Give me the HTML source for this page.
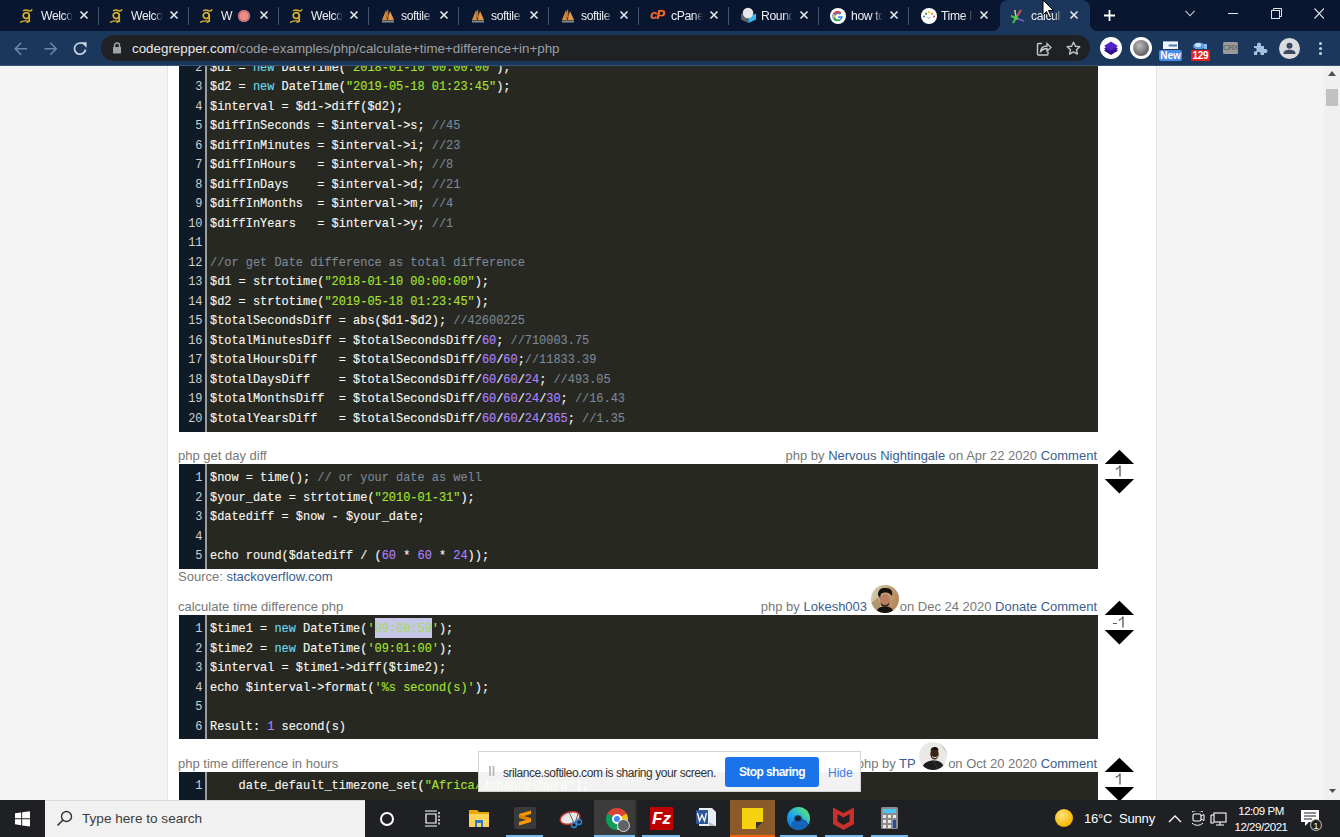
<!DOCTYPE html>
<html><head><meta charset="utf-8">
<style>
*{margin:0;padding:0;box-sizing:border-box}
html,body{width:1340px;height:837px;overflow:hidden;background:#fff;font-family:"Liberation Sans",sans-serif}
.abs{position:absolute}
#tabbar{position:absolute;left:0;top:0;width:1340px;height:31px;background:#08172f}
#toolbar{position:absolute;left:0;top:31px;width:1340px;height:35px;background:#1b375b}
#page{position:absolute;left:0;top:66px;width:1340px;height:734px;background:#fff;overflow:hidden}
#lgray{position:absolute;left:0;top:0;width:168px;height:734px;background:#f4f4f4;border-right:1px solid #e6e6e6}
#rgray{position:absolute;left:1156px;top:0;width:168px;height:734px;background:#f4f4f4;border-left:1px solid #e6e6e6}
#sbar{position:absolute;left:1324px;top:0;width:16px;height:734px;background:#f0f0f0}
#taskbar{position:absolute;left:0;top:800px;width:1340px;height:37px;background:#1f2023}
.code{position:absolute;left:179px;width:919px;background:#272822;overflow:hidden}
.gut{position:absolute;left:0;top:0;bottom:0;width:28px;background:#0f1a27;border-right:2px solid #9c9c9c}
.lines{position:absolute;left:0;font-family:"Liberation Mono",monospace;font-size:11.93px;line-height:19.5px;white-space:pre;color:#f8f8f2}
.ln{position:absolute;left:0;width:23.5px;text-align:right;font-family:"Liberation Mono",monospace;font-size:11.93px;line-height:19.5px;color:#d0d0d0;white-space:pre}
.txt{position:absolute;left:31px;font-family:"Liberation Mono",monospace;font-size:11.93px;line-height:19.5px;color:#f8f8f2;white-space:pre;-webkit-text-stroke:0.12px currentColor}
.s{color:#a6e22e}.k{color:#66d9ef}.c{color:#7b8794}.n{color:#ae81ff}.o{color:#f92672}
.title{position:absolute;left:178px;font-size:13px;color:#777;white-space:nowrap}
.meta{position:absolute;right:243px;font-size:13px;color:#777;white-space:nowrap}
.meta a{color:#3a5d92;text-decoration:none}
.up,.dn{position:absolute;left:1100px;width:40px;height:20px;overflow:visible}
.vc{position:absolute;left:1104.7px;width:29.4px;text-align:center;font-size:14.5px;line-height:16px;color:#4a4a4a}

.tab{position:absolute;top:0;height:31px;width:90px}
.tsep{position:absolute;top:7px;width:1px;height:18px;background:#45556b}
.fav{position:absolute;top:8px;width:16px;height:16px;overflow:visible}
.ttl{position:absolute;top:8px;font-size:12.2px;letter-spacing:-0.4px;color:#eceef2;white-space:nowrap;overflow:hidden;line-height:16px}
.tx{position:absolute;top:10px;width:10px;height:10px}
.ext{position:absolute}
</style></head><body>
<div id="tabbar">
<div class="abs" style="left:1000px;top:0;width:90px;height:31px;background:#1b375b;border-radius:8px 8px 0 0"></div>
<div class="abs" style="left:992px;top:23px;width:8px;height:8px;background:radial-gradient(circle at 0 0,transparent 8px,#1b375b 8.5px)"></div>
<div class="abs" style="left:1090px;top:23px;width:8px;height:8px;background:radial-gradient(circle at 100% 0,transparent 8px,#1b375b 8.5px)"></div>
<div class="ttl" style="left:41px;width:32px;-webkit-mask-image:linear-gradient(90deg,#000 72%,transparent);">Welco</div>
<svg class="tx" style="left:79px" viewBox="0 0 10 10"><path d="M1.5 1.5L8.5 8.5M8.5 1.5L1.5 8.5" stroke="#e8eaed" stroke-width="1.6"/></svg>
<div class="ttl" style="left:131px;width:32px;-webkit-mask-image:linear-gradient(90deg,#000 72%,transparent);">Welco</div>
<svg class="tx" style="left:169px" viewBox="0 0 10 10"><path d="M1.5 1.5L8.5 8.5M8.5 1.5L1.5 8.5" stroke="#e8eaed" stroke-width="1.6"/></svg>
<div class="tsep" style="left:98px"></div>
<div class="ttl" style="left:221px;width:32px;-webkit-mask-image:linear-gradient(90deg,#000 72%,transparent);">W</div>
<svg class="tx" style="left:259px" viewBox="0 0 10 10"><path d="M1.5 1.5L8.5 8.5M8.5 1.5L1.5 8.5" stroke="#e8eaed" stroke-width="1.6"/></svg>
<div class="tsep" style="left:188px"></div>
<div class="ttl" style="left:311px;width:32px;-webkit-mask-image:linear-gradient(90deg,#000 72%,transparent);">Welco</div>
<svg class="tx" style="left:349px" viewBox="0 0 10 10"><path d="M1.5 1.5L8.5 8.5M8.5 1.5L1.5 8.5" stroke="#e8eaed" stroke-width="1.6"/></svg>
<div class="tsep" style="left:278px"></div>
<div class="ttl" style="left:401px;width:32px;-webkit-mask-image:linear-gradient(90deg,#000 72%,transparent);">softile</div>
<svg class="tx" style="left:439px" viewBox="0 0 10 10"><path d="M1.5 1.5L8.5 8.5M8.5 1.5L1.5 8.5" stroke="#e8eaed" stroke-width="1.6"/></svg>
<div class="tsep" style="left:368px"></div>
<div class="ttl" style="left:491px;width:32px;-webkit-mask-image:linear-gradient(90deg,#000 72%,transparent);">softile</div>
<svg class="tx" style="left:529px" viewBox="0 0 10 10"><path d="M1.5 1.5L8.5 8.5M8.5 1.5L1.5 8.5" stroke="#e8eaed" stroke-width="1.6"/></svg>
<div class="tsep" style="left:458px"></div>
<div class="ttl" style="left:581px;width:32px;-webkit-mask-image:linear-gradient(90deg,#000 72%,transparent);">softile</div>
<svg class="tx" style="left:619px" viewBox="0 0 10 10"><path d="M1.5 1.5L8.5 8.5M8.5 1.5L1.5 8.5" stroke="#e8eaed" stroke-width="1.6"/></svg>
<div class="tsep" style="left:548px"></div>
<div class="ttl" style="left:671px;width:32px;-webkit-mask-image:linear-gradient(90deg,#000 72%,transparent);">cPanel</div>
<svg class="tx" style="left:709px" viewBox="0 0 10 10"><path d="M1.5 1.5L8.5 8.5M8.5 1.5L1.5 8.5" stroke="#e8eaed" stroke-width="1.6"/></svg>
<div class="tsep" style="left:638px"></div>
<div class="ttl" style="left:761px;width:32px;-webkit-mask-image:linear-gradient(90deg,#000 72%,transparent);">Round</div>
<svg class="tx" style="left:799px" viewBox="0 0 10 10"><path d="M1.5 1.5L8.5 8.5M8.5 1.5L1.5 8.5" stroke="#e8eaed" stroke-width="1.6"/></svg>
<div class="tsep" style="left:728px"></div>
<div class="ttl" style="left:851px;width:32px;-webkit-mask-image:linear-gradient(90deg,#000 72%,transparent);">how to</div>
<svg class="tx" style="left:889px" viewBox="0 0 10 10"><path d="M1.5 1.5L8.5 8.5M8.5 1.5L1.5 8.5" stroke="#e8eaed" stroke-width="1.6"/></svg>
<div class="tsep" style="left:818px"></div>
<div class="ttl" style="left:941px;width:32px;-webkit-mask-image:linear-gradient(90deg,#000 72%,transparent);">Time I</div>
<svg class="tx" style="left:979px" viewBox="0 0 10 10"><path d="M1.5 1.5L8.5 8.5M8.5 1.5L1.5 8.5" stroke="#e8eaed" stroke-width="1.6"/></svg>
<div class="tsep" style="left:908px"></div>
<div class="ttl" style="left:1031px;width:32px;-webkit-mask-image:linear-gradient(90deg,#000 72%,transparent);">calcul</div>
<svg class="tx" style="left:1069px" viewBox="0 0 10 10"><path d="M1.5 1.5L8.5 8.5M8.5 1.5L1.5 8.5" stroke="#e8eaed" stroke-width="1.6"/></svg>
<svg class="fav" style="left:20px" viewBox="0 0 16 16"><g fill="none" stroke="#d6b02c" stroke-linecap="round"><path d="M3.5 2.6C5 1.8 7.5 2.2 9 2.8C10.5 3.2 11.5 2.5 11.8 1.8" stroke-width="1.5"/><circle cx="6.2" cy="7.6" r="3" stroke-width="1.7"/><path d="M9.3 6.5V11.5C9.3 13 8.5 14 7 14.2" stroke-width="1.6"/><path d="M0.6 14.2C3 13 6.5 12.6 9.6 13.4" stroke-width="1.4"/></g><circle cx="7" cy="7.4" r="1.1" fill="#0a1830"/></svg>
<svg class="fav" style="left:110px" viewBox="0 0 16 16"><g fill="none" stroke="#d6b02c" stroke-linecap="round"><path d="M3.5 2.6C5 1.8 7.5 2.2 9 2.8C10.5 3.2 11.5 2.5 11.8 1.8" stroke-width="1.5"/><circle cx="6.2" cy="7.6" r="3" stroke-width="1.7"/><path d="M9.3 6.5V11.5C9.3 13 8.5 14 7 14.2" stroke-width="1.6"/><path d="M0.6 14.2C3 13 6.5 12.6 9.6 13.4" stroke-width="1.4"/></g><circle cx="7" cy="7.4" r="1.1" fill="#0a1830"/></svg>
<svg class="fav" style="left:200px" viewBox="0 0 16 16"><g fill="none" stroke="#d6b02c" stroke-linecap="round"><path d="M3.5 2.6C5 1.8 7.5 2.2 9 2.8C10.5 3.2 11.5 2.5 11.8 1.8" stroke-width="1.5"/><circle cx="6.2" cy="7.6" r="3" stroke-width="1.7"/><path d="M9.3 6.5V11.5C9.3 13 8.5 14 7 14.2" stroke-width="1.6"/><path d="M0.6 14.2C3 13 6.5 12.6 9.6 13.4" stroke-width="1.4"/></g><circle cx="7" cy="7.4" r="1.1" fill="#0a1830"/></svg>
<svg class="fav" style="left:290px" viewBox="0 0 16 16"><g fill="none" stroke="#d6b02c" stroke-linecap="round"><path d="M3.5 2.6C5 1.8 7.5 2.2 9 2.8C10.5 3.2 11.5 2.5 11.8 1.8" stroke-width="1.5"/><circle cx="6.2" cy="7.6" r="3" stroke-width="1.7"/><path d="M9.3 6.5V11.5C9.3 13 8.5 14 7 14.2" stroke-width="1.6"/><path d="M0.6 14.2C3 13 6.5 12.6 9.6 13.4" stroke-width="1.4"/></g><circle cx="7" cy="7.4" r="1.1" fill="#0a1830"/></svg>
<div class="abs" style="left:238px;top:9.5px;width:12px;height:12px;border-radius:50%;background:#f2897c;box-shadow:0 0 0 1.5px #b86a6a inset,0 0 0 2.5px #e09090 inset"></div>
<svg class="fav" style="left:380px" viewBox="0 0 16 16"><path d="M2 12L6 2L7 12Z" fill="#d98b3a"/><path d="M7.5 12L10 3L14 12Z" fill="#e59a4a"/><path d="M5 6L8 1L9 12Z" fill="#c8782e"/><rect x="2" y="12.5" width="12" height="2" fill="#8a8a8a"/></svg>
<svg class="fav" style="left:470px" viewBox="0 0 16 16"><path d="M2 12L6 2L7 12Z" fill="#d98b3a"/><path d="M7.5 12L10 3L14 12Z" fill="#e59a4a"/><path d="M5 6L8 1L9 12Z" fill="#c8782e"/><rect x="2" y="12.5" width="12" height="2" fill="#8a8a8a"/></svg>
<svg class="fav" style="left:560px" viewBox="0 0 16 16"><path d="M2 12L6 2L7 12Z" fill="#d98b3a"/><path d="M7.5 12L10 3L14 12Z" fill="#e59a4a"/><path d="M5 6L8 1L9 12Z" fill="#c8782e"/><rect x="2" y="12.5" width="12" height="2" fill="#8a8a8a"/></svg>
<div class="abs" style="left:650px;top:7px;font:italic bold 13px 'Liberation Sans';color:#ff6c2c;letter-spacing:-1px">cP</div>
<svg class="fav" style="left:740px;top:7px" viewBox="0 0 16 16"><path d="M1 6.5L8.5 10V16L1 12.5Z" fill="#56636d"/><path d="M8.5 10L16 6.5V12.5L8.5 16Z" fill="#38b6ee"/><circle cx="8" cy="6" r="5.3" fill="#e6e6e6"/><path d="M1 6.5L8.5 10L16 6.5" fill="none" stroke="none"/></svg>
<svg class="fav" style="left:830px" viewBox="0 0 16 16"><circle cx="8" cy="8" r="8" fill="#fff"/><path d="M12.8 8.2H8v1.8h2.8c-.3 1.2-1.4 2.1-2.8 2.1a3 3 0 1 1 1.9-5.4l1.3-1.3A4.9 4.9 0 1 0 8 13c2.7 0 4.9-2 4.9-4.9z" fill="#4285f4"/><path d="M3.4 5.6A5 5 0 0 1 11.2 4.4L9.9 5.7A3 3 0 0 0 5 7Z" fill="#ea4335"/><path d="M3.3 10.4A5 5 0 0 0 10.5 12.4L9.3 11A3 3 0 0 1 5 9.1Z" fill="#34a853"/><path d="M3.3 5.6A5 5 0 0 0 3.3 10.4L5 9.1A3 3 0 0 1 5 7Z" fill="#fbbc05"/></svg>
<svg class="fav" style="left:921px;top:8px" width="15" height="15" viewBox="0 0 15 15"><circle cx="7.5" cy="7.5" r="7.5" fill="#fff"/><circle cx="2.8" cy="8" r="1" fill="#3a8ad8"/><circle cx="4.8" cy="5.3" r="1" fill="#43a047"/><circle cx="7.4" cy="4" r="1" fill="#f5c518"/><circle cx="10.3" cy="5.3" r="1" fill="#fb8c00"/><circle cx="12.2" cy="8" r="1" fill="#e84a7a"/><path d="M6 8.5L7.4 10L8.8 8.5" stroke="#999" stroke-width="0.9" fill="none"/></svg>
<svg class="fav" style="left:1010px" viewBox="0 0 16 16"><path d="M6 10L3 15M6 10L5 2M6 10L11 2M6 10L14 13M6 10L1 8" stroke-width="1.3" fill="none" stroke="#bbb"/><path d="M6 10L3 15" stroke="#3fbf3f" stroke-width="2"/><path d="M6 10L11 2" stroke="#e05050" stroke-width="1.5"/><path d="M6 10L14 13" stroke="#7050c0" stroke-width="1.5"/><path d="M6 10L1 8" stroke="#40c040" stroke-width="2"/><path d="M6 10L5 2" stroke="#d0d040" stroke-width="1.3"/><circle cx="6" cy="10" r="2" fill="#50d040"/></svg>
<svg class="abs" style="left:1103px;top:9px" width="13" height="13" viewBox="0 0 13 13"><path d="M6.5 1V12M1 6.5H12" stroke="#fff" stroke-width="1.8"/></svg>
<svg class="abs" style="left:1185px;top:9.5px" width="10" height="7" viewBox="0 0 10 7"><path d="M0.5 0.8L5 5.8L9.5 0.8" stroke="#c8ccd4" stroke-width="1.1" fill="none"/></svg>
<div class="abs" style="left:1228px;top:13px;width:10px;height:1px;background:#e8eaed"></div>
<svg class="abs" style="left:1270.5px;top:8px" width="11" height="11" viewBox="0 0 11 11"><path d="M2.5 2.5V0.5H10.5V8.5H8.5" stroke="#e0e2e6" fill="none"/><rect x="0.5" y="2.5" width="8" height="8" stroke="#e0e2e6" fill="none"/></svg>
<svg class="abs" style="left:1313.5px;top:7.5px" width="10.5" height="11" viewBox="0 0 10.5 11"><path d="M0.5 0.5L10 10.5M10 0.5L0.5 10.5" stroke="#e0e2e6" stroke-width="1.1"/></svg>
<svg class="abs" style="left:1042px;top:0px" width="14" height="20" viewBox="0 0 14 20"><path d="M1 0L1 15L4.5 11.5L7.5 18L9.5 17L6.5 10.5L11.5 10.5Z" fill="#fff" stroke="#000" stroke-width="1"/></svg>
</div>
<div id="toolbar">
<svg class="abs" style="left:13px;top:10px" width="16" height="16" viewBox="0 0 16 16"><path d="M14 7.8H2.2M8.2 1.8L2.2 7.8L8.2 13.8" stroke="#6f84a3" stroke-width="1.6" fill="none"/></svg>
<svg class="abs" style="left:42px;top:10px" width="16" height="16" viewBox="0 0 16 16"><path d="M2.5 7.8H14.3M8.3 1.8L14.3 7.8L8.3 13.8" stroke="#6f84a3" stroke-width="1.6" fill="none"/></svg>
<svg class="abs" style="left:72px;top:10px" width="16" height="16" viewBox="0 0 16 16"><path d="M10.5 2.6A5.6 5.6 0 1 0 13.6 8.5" stroke="#c9d6e6" stroke-width="1.7" fill="none"/><path d="M9 1.2H14.6V6.8Z" fill="#c9d6e6"/></svg>
<div class="abs" style="left:101px;top:4px;width:989px;height:26px;border-radius:13px;background:#202124"></div>
<svg class="abs" style="left:112px;top:11px" width="10" height="12" viewBox="0 0 10 12"><path d="M2.5 5V3.5a2.5 2.5 0 0 1 5 0V5" stroke="#a0a4aa" stroke-width="1.5" fill="none"/><rect x="1" y="5" width="8" height="6.5" fill="#a0a4aa"/></svg>
<div class="abs" style="left:132px;top:10px;font-size:13.37px;line-height:16px;color:#9aa0a6;white-space:nowrap"><span style="color:#e8eaed">codegrepper.com</span>/code-examples/php/calculate+time+difference+in+php</div>
<svg class="abs" style="left:1036px;top:10px" width="16" height="15" viewBox="0 0 16 15"><path d="M6 2.5H2.5a1 1 0 0 0-1 1V13a1 1 0 0 0 1 1H11a1 1 0 0 0 1-1V10.5" stroke="#c4c7cb" stroke-width="1.4" fill="none"/><path d="M4.5 10.5C5 6.5 8 5 11 5V2.5L15 6.5L11 10V7.5C8.5 7.5 6.5 8.3 4.5 10.5Z" stroke="#c4c7cb" stroke-width="1.3" fill="none"/></svg>
<svg class="abs" style="left:1066px;top:10px" width="15" height="15" viewBox="0 0 15 15"><path d="M7.5 1.2L9.4 5.3L13.8 5.7L10.5 8.7L11.4 13.1L7.5 10.9L3.6 13.1L4.5 8.7L1.2 5.7L5.6 5.3Z" stroke="#c4c7cb" stroke-width="1.4" fill="none" stroke-linejoin="round"/></svg>
<div class="abs" style="left:1100px;top:6px;width:22px;height:22px;border-radius:50%;background:#fff"></div>
<svg class="abs" style="left:1103px;top:9px" width="16" height="17" viewBox="0 0 16 17"><path d="M8 6L15 10.5L8 15L1 10.5Z" fill="#2a0a80"/><path d="M8 4L15 8.5L8 13L1 8.5Z" fill="#3a14a0"/><path d="M8 1.5L15 6L8 10.5L1 6Z" fill="#5224c8"/></svg>
<div class="abs" style="left:1130px;top:6px;width:22px;height:22px;border-radius:50%;background:#fff"></div>
<div class="abs" style="left:1133px;top:9px;width:16px;height:16px;border-radius:50%;background:radial-gradient(circle at 40% 35%,#bdbdbd 0,#8a8a8a 40%,#4a4a4a 90%)"></div>
<svg class="abs" style="left:1163px;top:10px" width="15" height="8" viewBox="0 0 15 8"><rect width="15" height="8" fill="#f0f4fa"/><path d="M6 3.5H14V5.5H7C5.5 5.5 5 4.5 6 3.5Z" fill="#4a7ab8"/><rect x="0" y="0" width="15" height="1" fill="#4a7ab8" opacity=".6"/></svg>
<div class="abs" style="left:1159px;top:19px;width:23px;height:11px;border-radius:2px;background:#4a8ae8;color:#fff;font:bold 10px/11px 'Liberation Sans';text-align:center">New</div>
<svg class="abs" style="left:1192px;top:10px" width="16" height="8" viewBox="0 0 16 8"><ellipse cx="7" cy="5" rx="6" ry="3.5" fill="#5aa0e8"/><ellipse cx="6" cy="4" rx="3" ry="2" fill="#cfe3f8"/><rect x="12" y="3" width="3" height="5" fill="#8ab8f0"/></svg>
<div class="abs" style="left:1191px;top:19px;width:19px;height:11px;border-radius:1px;background:#e02020;color:#fff;font:bold 10px/11px 'Liberation Sans';text-align:center;letter-spacing:-0.3px">129</div>
<div class="abs" style="left:1223px;top:11px;width:15px;height:12px;border-radius:1.5px;background:#9a9a9a;color:#555;font:8px/12px 'Liberation Sans';text-align:center;letter-spacing:-0.6px;overflow:hidden">CRX</div>
<svg class="abs" style="left:1252px;top:10px" width="16" height="15" viewBox="0 0 16 15"><path d="M2 5H5V3.5a2 2 0 0 1 4 0V5H12V8H13.5a2 2 0 0 1 0 4H12V14H8.5V12.5a1.7 1.7 0 0 0-3.4 0V14H2V10.5H3a1.7 1.7 0 0 0 0-3.4H2Z" fill="#a9c1e0"/></svg>
<svg class="abs" style="left:1279px;top:7px" width="21" height="21" viewBox="0 0 21 21"><circle cx="10.5" cy="10.5" r="10.5" fill="#dadce0"/><circle cx="10.5" cy="7.8" r="3" fill="#3c4a60"/><path d="M4.5 15.5C4.5 12.8 7.5 11.8 10.5 11.8C13.5 11.8 16.5 12.8 16.5 15.5V16H4.5Z" fill="#3c4a60"/></svg>
<div class="abs" style="left:1318.5px;top:11px;width:3px;height:3px;border-radius:50%;background:#c8d0dc;box-shadow:0 5px 0 #c8d0dc,0 10px 0 #c8d0dc"></div>
<div class="abs" style="left:0;top:33.5px;width:1340px;height:1.5px;background:#3a5478"></div>
</div>
<div id="page">
  <div id="lgray"></div>
  <div id="rgray"></div>
  <div id="sbar"><svg class="abs" style="left:4px;top:5px" width="8" height="5" viewBox="0 0 8 5"><path d="M0 5L4 0L8 5Z" fill="#505050"/></svg><div class="abs" style="left:2px;top:23px;width:12px;height:17px;background:#c1c1c1"></div><svg class="abs" style="left:4.5px;top:723.4px" width="7" height="4" viewBox="0 0 7 4"><path d="M0 0L3.5 4L7 0Z" fill="#505050"/></svg></div>

<div class="code" style="top:-32px;height:398px">
 <div class="gut"></div>
 <div class="ln" style="top:5.25px">1
2
3
4
5
6
7
8
9
10
11
12
13
14
15
16
17
18
19
20</div>
 <div class="txt" style="top:5.25px">$d1 = <span class="k">new</span> DateTime(<span class="s">"2018-01-10 00:00:00"</span>);
$d1 = <span class="k">new</span> DateTime(<span class="s">"2018-01-10 00:00:00"</span>);
$d2 = <span class="k">new</span> DateTime(<span class="s">"2019-05-18 01:23:45"</span>);
$interval = $d1-&gt;diff($d2);
$diffInSeconds = $interval-&gt;s; <span class="c">//45</span>
$diffInMinutes = $interval-&gt;i; <span class="c">//23</span>
$diffInHours   = $interval-&gt;h; <span class="c">//8</span>
$diffInDays    = $interval-&gt;d; <span class="c">//21</span>
$diffInMonths  = $interval-&gt;m; <span class="c">//4</span>
$diffInYears   = $interval-&gt;y; <span class="c">//1</span>

<span class="c">//or get Date difference as total difference</span>
$d1 = strtotime(<span class="s">"2018-01-10 00:00:00"</span>);
$d2 = strtotime(<span class="s">"2019-05-18 01:23:45"</span>);
$totalSecondsDiff = abs($d1-$d2); <span class="c">//42600225</span>
$totalMinutesDiff = $totalSecondsDiff/<span class="n">60</span>; <span class="c">//710003.75</span>
$totalHoursDiff   = $totalSecondsDiff/<span class="n">60</span>/<span class="n">60</span>;<span class="c">//11833.39</span>
$totalDaysDiff    = $totalSecondsDiff/<span class="n">60</span>/<span class="n">60</span>/<span class="n">24</span>; <span class="c">//493.05</span>
$totalMonthsDiff  = $totalSecondsDiff/<span class="n">60</span>/<span class="n">60</span>/<span class="n">24</span>/<span class="n">30</span>; <span class="c">//16.43</span>
$totalYearsDiff   = $totalSecondsDiff/<span class="n">60</span>/<span class="n">60</span>/<span class="n">24</span>/<span class="n">365</span>; <span class="c">//1.35</span></div>
</div>

<div class="title" style="top:382px">php get day diff</div>
<div class="meta" style="top:382px">php by <a>Nervous Nightingale</a> on Apr 22 2020 <a>Comment</a></div>
<svg class="up" style="top:380.0px"><path d="M4.7 18.1L19.4 3.7L34.1 18.1Z" fill="#000"/></svg><svg class="abs" style="left:1115px;top:399px" width="8" height="13" viewBox="0 0 8 13"><path d="M5 0.8V11.4" stroke="#555" stroke-width="1.3"/><path d="M5.2 0.8C4.2 2.6 2.8 3.6 0.8 4.4" stroke="#555" stroke-width="1.2" fill="none"/></svg><svg class="dn" style="top:410.0px"><path d="M4.7 3.1L34.1 3.1L19.4 17.4Z" fill="#000"/></svg>
<div class="code" style="top:398px;height:105px">
 <div class="gut"></div>
 <div class="ln" style="top:5.25px">1
2
3
4
5</div>
 <div class="txt" style="top:5.25px">$now = time(); <span class="c">// or your date as well</span>
$your_date = strtotime(<span class="s">"2010-01-31"</span>);
$datediff = $now - $your_date;

echo round($datediff / (<span class="n">60</span> * <span class="n">60</span> * <span class="n">24</span>));</div>
</div>
<div class="title" style="top:502.5px">Source: <a style="color:#3a5d92">stackoverflow.com</a></div>

<div class="title" style="top:532.5px">calculate time difference php</div>
<div class="meta" style="top:533px">php by <a>Lokesh003</a> <span style="display:inline-block;position:relative;width:28px;height:1px;margin-right:1px"><svg style="position:absolute;left:0;top:-25px" width="28" height="28" viewBox="0 0 28 28"><defs><clipPath id="c1"><circle cx="14" cy="14" r="14"/></clipPath><linearGradient id="g1" x1="0" y1="0" x2="1" y2="0.3"><stop offset="0" stop-color="#dcd6c0"/><stop offset="0.45" stop-color="#c4b08a"/><stop offset="1" stop-color="#b8895c"/></linearGradient></defs><g clip-path="url(#c1)"><rect width="28" height="28" fill="url(#g1)"/><path d="M0 18L8 12L10 28H0Z" fill="#a88860" opacity=".7"/><ellipse cx="14" cy="15" rx="5" ry="6.5" fill="#b88060"/><path d="M7 10C7 4 11 2.5 15 3C20 3 22 6 21 11L19 9C17 7 12 7 10 9L9 13Z" fill="#15100c"/><path d="M9.5 17C11 21 17 21 18.5 17L18 20C16 22 12 22 10 20Z" fill="#3a2418"/><path d="M5 28C6 23 10 21 14 21.5C18 21 22 23 23 28Z" fill="#16120e"/></g></svg></span>on Dec 24 2020 <a>Donate</a> <a>Comment</a></div>
<svg class="up" style="top:531.0px"><path d="M4.7 18.1L19.4 3.7L34.1 18.1Z" fill="#000"/></svg><div class="abs" style="left:1112.5px;top:556.5px;width:4.5px;height:1.3px;background:#555"></div><svg class="abs" style="left:1117.5px;top:550px" width="8" height="13" viewBox="0 0 8 13"><path d="M5 0.8V11.4" stroke="#555" stroke-width="1.3"/><path d="M5.2 0.8C4.2 2.6 2.8 3.6 0.8 4.4" stroke="#555" stroke-width="1.2" fill="none"/></svg><svg class="dn" style="top:561.0px"><path d="M4.7 3.1L34.1 3.1L19.4 17.4Z" fill="#000"/></svg>
<div class="code" style="top:549px;height:124px">
 <div class="gut"></div>
 <div class="ln" style="top:5.25px">1
2
3
4
5
6</div>
 <div class="txt" style="top:5.25px">$time1 = <span class="k">new</span> DateTime(<span class="s">'<span style="background:#c6c6e6;color:#a6d86a;display:inline-block;height:17.5px;vertical-align:top;box-shadow:0 -2px 0 #c6c6e6">09:00:59</span>'</span>);
$time2 = <span class="k">new</span> DateTime(<span class="s">'09:01:00'</span>);
$interval = $time1-&gt;diff($time2);
echo $interval-&gt;format(<span class="s">'%s second(s)'</span>);

Result: <span class="n">1</span> second(s)</div>
</div>

<div class="title" style="top:690px">php time difference in hours</div>
<div class="meta" style="top:690px">php by <a>TP</a> <span style="display:inline-block;position:relative;width:28px;height:1px;margin-right:1px"><svg style="position:absolute;left:0;top:-25px" width="28" height="28" viewBox="0 0 28 28"><defs><clipPath id="c2"><circle cx="14" cy="14" r="14"/></clipPath></defs><g clip-path="url(#c2)"><rect width="28" height="28" fill="#ebe9e6"/><path d="M20 0H28V12Z" fill="#c8c8c8"/><ellipse cx="15.5" cy="12" rx="4.2" ry="5.5" fill="#3a2418"/><path d="M11.5 9C12 5.5 14 5 16 5C18.5 5 19.5 7 19.5 9L18 8C16 7 13 7.5 11.5 9Z" fill="#120c08"/><path d="M13 14.5C14.5 16 17 16 18.5 14.5" stroke="#e8e0d8" stroke-width="1" fill="none"/><path d="M2 28C4 21 9 18 15 18.5C21 18 25 22 26 28Z" fill="#1c1c1e"/><path d="M14 18L19 28" stroke="#3a3a3a" stroke-width="1"/></g></svg></span>on Oct 20 2020 <a>Comment</a></div>
<svg class="up" style="top:688.0px"><path d="M4.7 18.1L19.4 3.7L34.1 18.1Z" fill="#000"/></svg><svg class="abs" style="left:1115px;top:707px" width="8" height="13" viewBox="0 0 8 13"><path d="M5 0.8V11.4" stroke="#555" stroke-width="1.3"/><path d="M5.2 0.8C4.2 2.6 2.8 3.6 0.8 4.4" stroke="#555" stroke-width="1.2" fill="none"/></svg><svg class="dn" style="top:718.0px"><path d="M4.7 3.1L34.1 3.1L19.4 17.4Z" fill="#000"/></svg>
<div class="code" style="top:706px;height:60px">
 <div class="gut"></div>
 <div class="ln" style="top:5.25px">1</div>
 <div class="txt" style="top:5.25px">    date_default_timezone_set(<span class="s">"Africa/Johannesburg"</span>);</div>
</div>

</div>
<div id="taskbar">
<svg class="abs" style="left:15px;top:11px" width="15.3" height="15.6" viewBox="0 0 16 16"><path d="M0 2.2L6.5 1.3V7.5H0Z M7.5 1.1L16 0V7.5H7.5Z M0 8.5H6.5V14.7L0 13.8Z M7.5 8.5H16V16L7.5 14.9Z" fill="#fff"/></svg>
<div class="abs" style="left:45px;top:0px;width:320px;height:37px;background:#f1f1f1;border-top:1px solid #d8d8d8"></div>
<svg class="abs" style="left:56px;top:10px" width="17" height="17" viewBox="0 0 17 17"><circle cx="10.5" cy="6.5" r="5" stroke="#333" stroke-width="1.4" fill="none"/><path d="M7 10L1.5 15.5" stroke="#333" stroke-width="1.6"/></svg>
<div class="abs" style="left:82px;top:10px;font-size:13.6px;line-height:17px;color:#3c3c3c;white-space:nowrap">Type here to search</div>
<div class="abs" style="left:380px;top:12px;width:14px;height:14px;border-radius:50%;border:2px solid #fff"></div>
<svg class="abs" style="left:423px;top:10px" width="18" height="17" viewBox="0 0 18 17"><path d="M2 1H14M2 16H14M3 4V13H13V4Z" stroke="#fff" stroke-width="1.2" fill="none"/><path d="M16 2V15" stroke="#fff" stroke-width="1.4" stroke-dasharray="2 1.5"/></svg>
<svg class="abs" style="left:469px;top:9px" width="20" height="18" viewBox="0 0 20 18"><path d="M0 1H8L10 3H20V18H0Z" fill="#e8a800"/><path d="M0 5H20V18H0Z" fill="#ffd35c"/><rect x="6" y="11" width="8" height="7" fill="#2a7ad8"/><rect x="8" y="14" width="4" height="4" fill="#ffd35c"/></svg>
<div class="abs" style="left:514px;top:7px;width:22px;height:22px;background:#3a3a3a;border-radius:2px"></div>
<svg class="abs" style="left:518px;top:10px" width="14" height="16" viewBox="0 0 14 16"><path d="M13 0.5V4L1 7.5V4Z" fill="#ff9800"/><path d="M1 4.5L13 8V11.5L1 8Z" fill="#e08000"/><path d="M13 8.5V12L1 15.5V12Z" fill="#ff9800"/></svg>
<svg class="abs" style="left:559px;top:9px" width="24" height="20" viewBox="0 0 24 20"><ellipse cx="11" cy="9" rx="10" ry="6" fill="#e8e8e8" transform="rotate(-15 11 9)"/><ellipse cx="11" cy="9" rx="10" ry="6" fill="none" stroke="#c83030" stroke-width="1.5" transform="rotate(-15 11 9)"/><circle cx="15" cy="16" r="2.5" fill="none" stroke="#2a8ad8" stroke-width="1.4"/><circle cx="20" cy="13" r="2.5" fill="none" stroke="#2a8ad8" stroke-width="1.4"/><path d="M10 3L15 14M19 5L16 14" stroke="#666" stroke-width="1"/></svg>
<div class="abs" style="left:594px;top:0px;width:41px;height:37px;background:#3b3b3b"></div>
<div class="abs" style="left:635px;top:0px;width:2px;height:37px;background:#2e2e2e"></div>
<div class="abs" style="left:606px;top:8px;width:22px;height:22px;border-radius:50%;background:conic-gradient(from -60deg,#db4437 0 120deg,#f4c20d 120deg 240deg,#0f9d58 240deg 360deg)"></div>
<div class="abs" style="left:612px;top:14px;width:10px;height:10px;border-radius:50%;background:#4285f4;border:2px solid #fff"></div>
<div class="abs" style="left:617px;top:19px;width:13px;height:13px;border-radius:50%;background:#5f6368;border:1.5px solid #ddd"></div>
<div class="abs" style="left:650px;top:7px;width:23px;height:23px;background:#bf0000"></div>
<div class="abs" style="left:652px;top:7px;font:italic bold 17px/23px 'Liberation Sans';color:#fff">Fz</div>
<svg class="abs" style="left:696px;top:7px" width="21" height="20" viewBox="0 0 21 20"><path d="M3 1H16L20 5V19H3Z" fill="#e8eef8"/><path d="M0 3H12V17H0Z" fill="#2b5797"/><path d="M1.5 6L3.5 14L6 8L8.5 14L10.5 6" stroke="#fff" stroke-width="1.3" fill="none"/><path d="M13 15L20 19H13Z" fill="#bbb"/></svg>
<div class="abs" style="left:730px;top:0px;width:45px;height:37px;background:#8c5a2a"></div>
<div class="abs" style="left:730px;top:35px;width:45px;height:2px;background:#f7630c"></div>
<svg class="abs" style="left:742px;top:8px" width="21" height="21" viewBox="0 0 21 21"><path d="M0 0H21V14L14 21H0Z" fill="#f5d20c"/><path d="M21 14L14 21V14Z" fill="#333"/></svg>
<div class="abs" style="left:787px;top:7px;width:23px;height:23px;border-radius:50%;background:radial-gradient(ellipse 60% 45% at 55% 78%,#1464b8 0 60%,transparent 62%),linear-gradient(45deg,#0c6cd0 0,#1ea8e8 45%,#4fd890 80%,#60e060 100%)"></div>
<div class="abs" style="left:795px;top:16px;width:6px;height:5px;border-radius:50%;background:#1f2023;box-shadow:0 0 0 1px #0c58b0"></div>
<svg class="abs" style="left:833px;top:7px" width="21" height="23" viewBox="0 0 21 23"><path d="M0 0.5L10.5 6L21 0.5V17L10.5 23L0 17Z" fill="#c8302c"/><path d="M4.5 7L10.5 10.5L16.5 7V14.5L10.5 18L4.5 14.5Z" fill="#1f2023"/></svg>
<svg class="abs" style="left:881px;top:7px" width="17" height="22" viewBox="0 0 17 22"><rect width="17" height="22" rx="1.5" fill="#8c8c8c"/><rect x="2" y="2" width="13" height="4" fill="#4cc2f0"/><g fill="#e8e8e8"><rect x="2" y="8" width="3" height="3"/><rect x="7" y="8" width="3" height="3"/><rect x="12" y="8" width="3" height="3"/><rect x="2" y="13" width="3" height="3"/><rect x="7" y="13" width="3" height="3"/><rect x="2" y="18" width="3" height="3"/><rect x="7" y="18" width="3" height="3"/></g><rect x="12" y="13" width="3" height="8" fill="#1a4ea0"/></svg>
<div class="abs" style="left:506px;top:35px;width:37px;height:2px;background:#76b9ed"></div>
<div class="abs" style="left:594px;top:35px;width:41px;height:2px;background:#76b9ed"></div>
<div class="abs" style="left:642px;top:35px;width:38px;height:2px;background:#76b9ed"></div>

<div class="abs" style="left:780px;top:35px;width:37px;height:2px;background:#76b9ed"></div>
<div class="abs" style="left:825px;top:35px;width:38px;height:2px;background:#76b9ed"></div>
<div class="abs" style="left:871px;top:35px;width:37px;height:2px;background:#76b9ed"></div>
<div class="abs" style="left:1055px;top:9px;width:18px;height:18px;border-radius:50%;background:radial-gradient(circle at 40% 35%,#ffe27a,#f5b800 70%,#e89a00)"></div>
<div class="abs" style="left:1084px;top:11px;font-size:13px;line-height:16px;color:#fff;white-space:nowrap;letter-spacing:-0.2px">16°C&nbsp; Sunny</div>
<svg class="abs" style="left:1168px;top:14px" width="14" height="9" viewBox="0 0 14 9"><path d="M1 8L7 2L13 8" stroke="#fff" stroke-width="1.3" fill="none"/></svg>
<svg class="abs" style="left:1191px;top:11px" width="14" height="16" viewBox="0 0 14 16"><rect x="2" y="3" width="8" height="7" rx="1.5" stroke="#fff" fill="none" stroke-width="1.1"/><path d="M10 5L13 3.5V9.5L10 8" stroke="#fff" fill="none" stroke-width="1"/><path d="M1 12C4 15 9 15 12 12M1 1C4 -1 9 -1 12 1" stroke="#fff" fill="none" stroke-width="1"/></svg>
<svg class="abs" style="left:1210px;top:11px" width="17" height="16" viewBox="0 0 17 16"><rect x="4" y="2" width="12" height="9" stroke="#fff" fill="none" stroke-width="1.1"/><path d="M10 11V14M6 14H14M1 4H4M1 4V12H4" stroke="#fff" fill="none" stroke-width="1.1"/></svg>
<div class="abs" style="left:1231px;top:3px;width:60px;font-size:11.5px;line-height:16px;color:#fff;text-align:center;white-space:nowrap;letter-spacing:-0.45px">12:09 PM<br>12/29/2021</div>
<svg class="abs" style="left:1300px;top:9px" width="24" height="22" viewBox="0 0 24 22"><path d="M1 1H19V13H9L5 17V13H1Z" fill="#fff"/><path d="M4 4H16M4 7H16M4 10H12" stroke="#1f1f1f" stroke-width="1"/><circle cx="16" cy="16" r="5.5" fill="#1f1f1f" stroke="#aaa" stroke-width="1.2"/><text x="16" y="19.5" font-size="9" fill="#fff" text-anchor="middle" font-family="Liberation Sans">1</text></svg>
</div>
<div class="abs" style="left:478px;top:751px;width:383px;height:41px;background:rgba(255,255,255,0.94);border:1px solid #d4d4d4"></div>
<div class="abs" style="left:489px;top:766px;width:1.5px;height:10px;background:#bdbdbd;box-shadow:3.5px 0 0 #bdbdbd"></div>
<div class="abs" style="left:503px;top:765.5px;font-size:12px;letter-spacing:-0.44px;line-height:15px;color:#333;white-space:nowrap">srilance.softileo.com is sharing your screen.</div>
<div class="abs" style="left:725px;top:757px;width:94px;height:30px;border-radius:3px;background:#1a73e8;color:#fff;font:bold 12px/30px 'Liberation Sans';letter-spacing:-0.6px;text-align:center">Stop sharing</div>
<div class="abs" style="left:828px;top:765.5px;font-size:12px;line-height:15px;color:#3d7de6">Hide</div>

</body></html>
